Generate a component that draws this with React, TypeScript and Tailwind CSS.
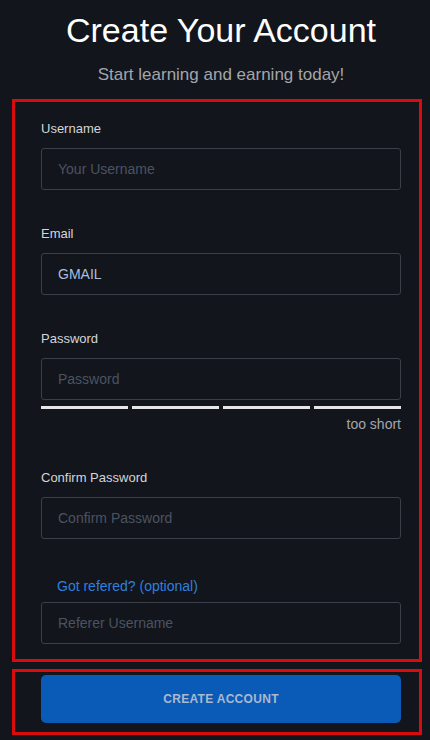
const inputCls =
  "w-full h-[42px] rounded-[3px] border border-[#3a3f48] bg-transparent px-4 text-[14px] text-[#a9bedf] placeholder:text-[#4b5361] outline-none";

const Field = ({ label, placeholder, value }: { label: string; placeholder: string; value?: string }) => (
  <div className="flex flex-col">
    <label className="text-[13px] leading-4 text-[#d2d5da] mb-[11px]">{label}</label>
    <input className={inputCls} placeholder={placeholder} defaultValue={value} />
  </div>
);

export default function App() {
  return (
    <div
      className="min-h-[740px] w-[430px] bg-[#12151c] flex flex-col"
      style={{ fontFamily: '"Liberation Sans", Arial, sans-serif' }}
    >
      <h1 className="text-center text-[34px] leading-[40px] text-white pt-[10px] pl-[12px]">Create Your Account</h1>
      <p className="text-center text-[17px] leading-5 text-[#a3a6ab] mt-[15px] pl-[12px]">Start learning and earning today!</p>

      <div className="ml-[12px] mr-[8px] mt-[14px] border-[3px] border-[#d80c0c] pl-[26px] pr-[18px] pt-[19px] pb-[15px] flex flex-col">
        <Field label="Username" placeholder="Your Username" />
        <div className="mt-[36px]">
          <Field label="Email" placeholder="Email" value="GMAIL" />
        </div>
        <div className="mt-[36px]">
          <Field label="Password" placeholder="Password" />
          <div className="grid grid-cols-4 gap-1 mt-[6px]">
            <div className="h-[3px] bg-[#e6e6e6]" />
            <div className="h-[3px] bg-[#e6e6e6]" />
            <div className="h-[3px] bg-[#e6e6e6]" />
            <div className="h-[3px] bg-[#e6e6e6]" />
          </div>
          <div className="text-right text-[14px] leading-4 text-[#a3a6ab] mt-[7px]">too short</div>
        </div>
        <div className="mt-[38px]">
          <Field label="Confirm Password" placeholder="Confirm Password" />
        </div>
        <div className="mt-[39px] pl-4 text-[14px] leading-4 text-[#2f80dc]">Got refered? (optional)</div>
        <input className={inputCls + " mt-[8px]"} placeholder="Referer Username" />
      </div>

      <div className="ml-[12px] mr-[8px] mt-[7px] border-[3px] border-[#d80c0c] pl-[26px] pr-[18px] pt-[3px] pb-[9px]">
        <button className="w-full h-[48px] rounded-[5px] bg-[#0a5bb8] text-[12px] font-bold tracking-wide text-[#a9b9cf]">
          CREATE ACCOUNT
        </button>
      </div>
    </div>
  );
}
